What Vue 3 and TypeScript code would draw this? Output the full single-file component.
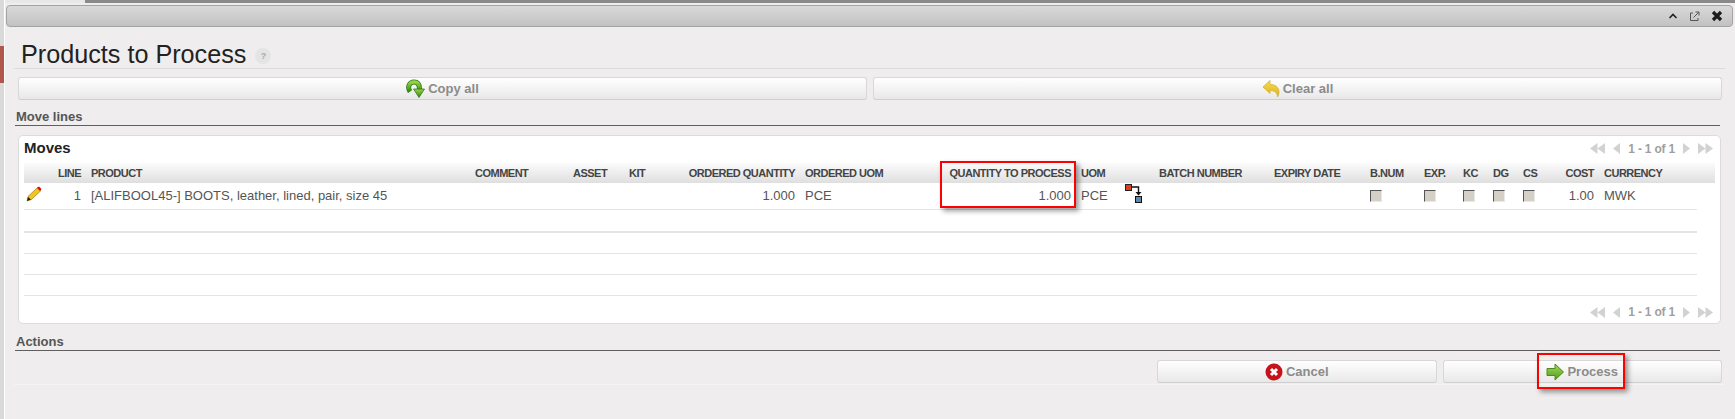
<template>
  <div class="page">
    <!-- page behind the dialog -->
    <div class="behind-top"></div>
    <div class="behind-left">
      <div class="behind-red"></div>
    </div>

    <div class="dialog">
      <div class="titlebar">
        <svg class="tb-icon" width="10" height="8" viewBox="0 0 10 8">
          <path d="M1.5 6 5 2.5 8.5 6" fill="none" stroke="#222" stroke-width="1.6" />
        </svg>
        <svg class="tb-icon" width="11" height="11" viewBox="0 0 11 11">
          <path d="M4 2H1.5v7.500H9V7" fill="none" stroke="#555" stroke-width="1" />
          <path d="M4.500 6.500 9.500 1.500M6.500 1H10v3.500" fill="none" stroke="#555" stroke-width="1" />
        </svg>
        <svg class="tb-icon" width="12" height="12" viewBox="0 0 12 12">
          <path d="M2 2l8 8M10 2l-8 8" fill="none" stroke="#1c1c1c" stroke-width="3.200" />
        </svg>
      </div>

      <div class="content">
        <div class="heading">
          <h1>Products to Process</h1>
          <span class="help">?</span>
        </div>

        <div class="btn-row top-buttons">
          <button class="btn">
            <svg width="19" height="19" viewBox="0 0 19 19">
              <defs>
                <linearGradient id="copyGreen" x1="0" y1="0" x2="0" y2="1">
                  <stop offset="0" stop-color="#9ad24c" />
                  <stop offset="1" stop-color="#2f8a12" />
                </linearGradient>
              </defs>
              <path d="M4 12.500C1 8 3.500 3 8 3c3.500 0 5.500 2.500 5.500 7" fill="none" stroke="#2d7a12" stroke-width="5" />
              <path d="M4 12.500C1 8 3.500 3 8 3c3.500 0 5.500 2.500 5.500 7" fill="none" stroke="url(#copyGreen)" stroke-width="3.500" />
              <path d="M7.500 10H18.500L13 18.500Z" fill="url(#copyGreen)" stroke="#2d7a12" stroke-width="0.8" />
            </svg>
            Copy all
          </button>
          <button class="btn">
            <svg width="18" height="19" viewBox="0 0 18 19">
              <defs>
                <linearGradient id="clearYellow" x1="0" y1="0" x2="0" y2="1">
                  <stop offset="0" stop-color="#f7dd4e" />
                  <stop offset="1" stop-color="#dcb11a" />
                </linearGradient>
              </defs>
              <path d="M1 8 8 1.500V5.500C13 5.500 17 8 17 13c0 2-.5 3.500-1.500 5C15.500 14 13 11.500 8 11.500V14.500Z" fill="url(#clearYellow)" stroke="#d3b13a" stroke-width="0.8" />
            </svg>
            Clear all
          </button>
        </div>

        <div class="section-title first">Move lines</div>

        <div class="panel">
          <div class="panel-head">
            <span class="panel-title">Moves</span>
            <div class="pager">
              <svg width="15" height="11" viewBox="0 0 15 11"><path d="M7.500 0v11L0 5.500ZM15 0v11L7.500 5.500Z" fill="#d2d2d2" /></svg>
              <svg width="7" height="11" viewBox="0 0 7 11"><path d="M7 0v11L0 5.500Z" fill="#d2d2d2" /></svg>
              <span class="pager-text">1 - 1 of 1</span>
              <svg width="7" height="11" viewBox="0 0 7 11"><path d="M0 0v11l7-5.500Z" fill="#d2d2d2" /></svg>
              <svg width="15" height="11" viewBox="0 0 15 11"><path d="M0 0v11l7.500-5.500ZM7.500 0v11L15 5.500Z" fill="#d2d2d2" /></svg>
            </div>
          </div>

          <div class="thead">
            <div class="grid">
              <div
                v-for="col in columns"
                :key="col.key"
                class="th"
                :class="{ right: col.right }"
              >{{ col.label }}</div>
            </div>
          </div>

          <div class="grid row">
            <div class="td pencil">
              <svg width="16" height="16" viewBox="0 0 16 16">
                <path d="M1 15l1-4.500L11.500 1.500 15 4.500 5.500 13.500Z" fill="#f3c51c" stroke="#8a6a10" stroke-width="0.6" />
                <path d="M1 15l1-4 3 2.500Z" fill="#222" />
                <path d="M11 2l2-1.500 2.500 2.500L14 5Z" fill="#d20d1e" />
              </svg>
            </div>
            <div class="td right">1</div>
            <div class="td">[ALIFBOOL45-] BOOTS, leather, lined, pair, size 45</div>
            <div class="td"></div>
            <div class="td"></div>
            <div class="td"></div>
            <div class="td right">1.000</div>
            <div class="td">PCE</div>
            <div class="td right">1.000</div>
            <div class="td">PCE</div>
            <div class="td split">
              <svg width="18" height="19" viewBox="0 0 18 19">
                <rect x="0.500" y="0.500" width="6" height="6" fill="#d8401f" stroke="#222" />
                <rect x="10.500" y="12.500" width="6" height="6" fill="#5f86ad" stroke="#111" />
                <path d="M7 3h6.500v6" fill="none" stroke="#111" stroke-width="1.400" />
                <path d="M10.500 8h6l-3 3.500Z" fill="#111" />
              </svg>
            </div>
            <div class="td"></div>
            <div class="td"></div>
            <div v-for="n in 5" :key="n" class="td"><span class="check"></span></div>
            <div class="td right">1.00</div>
            <div class="td">MWK</div>
          </div>

          <div class="empty thick"></div>
          <div class="empty"></div>
          <div class="empty"></div>
          <div class="empty"></div>

          <div class="panel-foot">
            <div class="pager">
              <svg width="15" height="11" viewBox="0 0 15 11"><path d="M7.500 0v11L0 5.500ZM15 0v11L7.500 5.500Z" fill="#d2d2d2" /></svg>
              <svg width="7" height="11" viewBox="0 0 7 11"><path d="M7 0v11L0 5.500Z" fill="#d2d2d2" /></svg>
              <span class="pager-text">1 - 1 of 1</span>
              <svg width="7" height="11" viewBox="0 0 7 11"><path d="M0 0v11l7-5.500Z" fill="#d2d2d2" /></svg>
              <svg width="15" height="11" viewBox="0 0 15 11"><path d="M0 0v11l7.500-5.500ZM7.500 0v11L15 5.500Z" fill="#d2d2d2" /></svg>
            </div>
          </div>
        </div>

        <div class="section-title second">Actions</div>

        <div class="btn-row bottom-buttons">
          <button class="btn">
            <svg width="18" height="18" viewBox="0 0 18 18">
              <circle cx="9" cy="9" r="8.500" fill="#c5121b" />
              <path d="M6 6l6 6M12 6l-6 6" stroke="#fff" stroke-width="3" />
            </svg>
            Cancel
          </button>
          <button class="btn">
            <svg width="18" height="18" viewBox="0 0 18 18">
              <defs>
                <linearGradient id="goGreen" x1="0" y1="0" x2="0" y2="1">
                  <stop offset="0" stop-color="#a8d655" />
                  <stop offset="1" stop-color="#4f9e1f" />
                </linearGradient>
              </defs>
              <path d="M1 5.500H9V1L17.500 9 9 17V12.500H1Z" fill="url(#goGreen)" stroke="#4b8a24" stroke-width="1" />
            </svg>
            Process
          </button>
        </div>
        <div class="foot-line"></div>
      </div>
    </div>

    <!-- red annotation boxes from the screenshot -->
    <div class="mark mark-qty"></div>
    <div class="mark mark-process"></div>
  </div>
</template>

<script setup lang="ts">
interface Column {
  key: string;
  label: string;
  right?: boolean;
}

const columns: Column[] = [
  { key: "edit", label: "" },
  { key: "line", label: "LINE", right: true },
  { key: "product", label: "PRODUCT" },
  { key: "comment", label: "COMMENT" },
  { key: "asset", label: "ASSET" },
  { key: "kit", label: "KIT" },
  { key: "orderedQty", label: "ORDERED QUANTITY", right: true },
  { key: "orderedUom", label: "ORDERED UOM" },
  { key: "qty", label: "QUANTITY TO PROCESS", right: true },
  { key: "uom", label: "UOM" },
  { key: "split", label: "" },
  { key: "batch", label: "BATCH NUMBER" },
  { key: "expiry", label: "EXPIRY DATE" },
  { key: "bnum", label: "B.NUM" },
  { key: "exp", label: "EXP." },
  { key: "kc", label: "KC" },
  { key: "dg", label: "DG" },
  { key: "cs", label: "CS" },
  { key: "cost", label: "COST", right: true },
  { key: "currency", label: "CURRENCY" },
];
</script>

<style>
html,
body {
  margin: 0;
  background: #efedee;
}
</style>

<style scoped>
.page {
  position: relative;
  width: 1735px;
  height: 419px;
  overflow: hidden;
  background: #efedee;
  font-family: "Liberation Sans", Arial, sans-serif;
}

.behind-top {
  position: absolute;
  left: 0;
  top: 0;
  right: 0;
  height: 3px;
  background: linear-gradient(90deg, #e8e8e8 0, #e8e8e8 85px, #8a8a8a 85px);
}

.behind-left {
  position: absolute;
  left: 0;
  top: 0;
  bottom: 0;
  width: 4px;
  background: #d9d9d9;
  border-right: 1px solid #fff;
}

.behind-red {
  margin-top: 46px;
  height: 37px;
  background: #b0564c;
}

.dialog {
  margin-left: 5px;
  padding-top: 5px;
  height: 414px;
}

.titlebar {
  margin-left: 1px;
  width: 1727px;
  height: 22px;
  box-sizing: border-box;
  border: 1px solid #a3a3a3;
  border-radius: 4px;
  background: linear-gradient(#d9d9d9, #c2c2c2);
  display: flex;
  align-items: center;
  justify-content: flex-end;
  gap: 11px;
  padding-right: 9px;
}

.content {
  padding-left: 9px;
  width: 1711px;
}

.heading {
  height: 42px;
  box-sizing: border-box;
  border-bottom: 1px solid #dcdcdc;
  display: flex;
  align-items: flex-end;
  padding-left: 7px;
}

h1 {
  margin: 0 0 -1px;
  font-size: 25.2px;
  font-weight: normal;
  line-height: 30px;
  color: #222;
}

.help {
  margin-left: 9px;
  margin-bottom: 4px;
  width: 16px;
  height: 16px;
  border-radius: 50%;
  background: #e4e4e4;
  color: #aaa;
  font-size: 9px;
  font-weight: bold;
  line-height: 16px;
  text-align: center;
}

.btn-row {
  display: flex;
  gap: 6px;
  padding-left: 4px;
  width: 1704px;
}

.top-buttons {
  margin-top: 8px;
}

.bottom-buttons {
  margin-top: 9px;
  margin-left: 1143px;
  width: 565px;
  padding-left: 0;
}

.btn {
  flex: 1 1 0;
  height: 23px;
  padding: 0;
  border: 1px solid #d8d8d8;
  border-bottom-color: #cfcfcf;
  border-radius: 3px;
  background: linear-gradient(#fff, #e9e8e8);
  color: #8b8b8b;
  font-family: inherit;
  font-size: 13px;
  font-weight: bold;
  display: flex;
  align-items: center;
  justify-content: center;
  gap: 3px;
}

.section-title {
  margin-left: 1px;
  padding-left: 1px;
  width: 1704px;
  border-bottom: 1px solid #5f5f5f;
  font-size: 13px;
  font-weight: bold;
  line-height: 16px;
  color: #555;
}

.section-title.first {
  margin-top: 9px;
}

.section-title.second {
  margin-top: 10px;
}

.panel {
  margin-left: 4px;
  margin-top: 9px;
  width: 1703px;
  height: 189px;
  box-sizing: border-box;
  background: #fff;
  border: 1px solid #dcdcdc;
  border-radius: 5px;
  padding-left: 5px;
}

.panel-head {
  height: 27px;
  box-sizing: border-box;
  padding: 0 7px 4px 0;
  display: flex;
  align-items: center;
  justify-content: space-between;
}

.panel-head .pager {
  margin-top: 2px;
}

.panel-title {
  font-size: 15px;
  font-weight: bold;
  color: #222;
}

.pager {
  display: flex;
  align-items: center;
  gap: 8px;
}

.pager-text {
  font-size: 12px;
  font-weight: bold;
  letter-spacing: -0.2px;
  color: #9f9f9f;
}

.thead {
  width: 1691px;
  height: 20px;
  background: linear-gradient(#fbfbfb, #dfdfdf);
}

.grid {
  display: grid;
  grid-template-columns: 26px 36px 384px 98px 56px 26px 150px 140px 136px 44px 34px 115px 96px 54px 39px 30px 30px 30px 51px 98px;
  width: 1673px;
}

.th {
  height: 20px;
  line-height: 20px;
  padding: 0 5px;
  box-sizing: border-box;
  white-space: nowrap;
  font-size: 11px;
  letter-spacing: -0.5px;
  font-weight: bold;
  color: #444;
}

.th.right,
.td.right {
  text-align: right;
}

.th.right {
  direction: rtl;
}

.row {
  height: 27px;
  border-bottom: 1px solid #e4e4e4;
  box-sizing: border-box;
}

.td {
  min-width: 0;
  padding: 0 5px;
  box-sizing: border-box;
  white-space: nowrap;
  line-height: 25px;
  font-size: 13px;
  color: #555;
}

.pencil {
  padding: 3px 0 0 2px;
  line-height: 0;
}

.split {
  padding: 1px 0 0 5px;
  line-height: 0;
}

.check {
  display: block;
  margin-top: 7px;
  width: 12px;
  height: 12px;
  box-sizing: border-box;
  background: #d4d0c8;
  border-top: 1px solid #555;
  border-left: 1px solid #555;
  border-right: 1px solid #e8e8e8;
  border-bottom: 1px solid #e8e8e8;
}

.empty {
  width: 1673px;
  height: 21px;
  box-sizing: border-box;
  border-bottom: 1px solid #e4e4e4;
}

.empty.thick {
  height: 23px;
  border-bottom-width: 2px;
}

.panel-foot {
  height: 27px;
  box-sizing: border-box;
  padding: 5px 7px 0 0;
  display: flex;
  align-items: center;
  justify-content: flex-end;
}

.foot-line {
  margin-top: 1px;
  width: 1711px;
  border-top: 1px solid #f5f4f4;
}

.mark {
  position: absolute;
  box-sizing: border-box;
  border: 2px solid #f00;
  box-shadow: 3px 3px 5px rgba(0, 0, 0, 0.4);
}

.mark-qty {
  left: 940px;
  top: 161px;
  width: 136px;
  height: 47px;
}

.mark-process {
  left: 1537px;
  top: 353px;
  width: 88px;
  height: 36px;
}
</style>
